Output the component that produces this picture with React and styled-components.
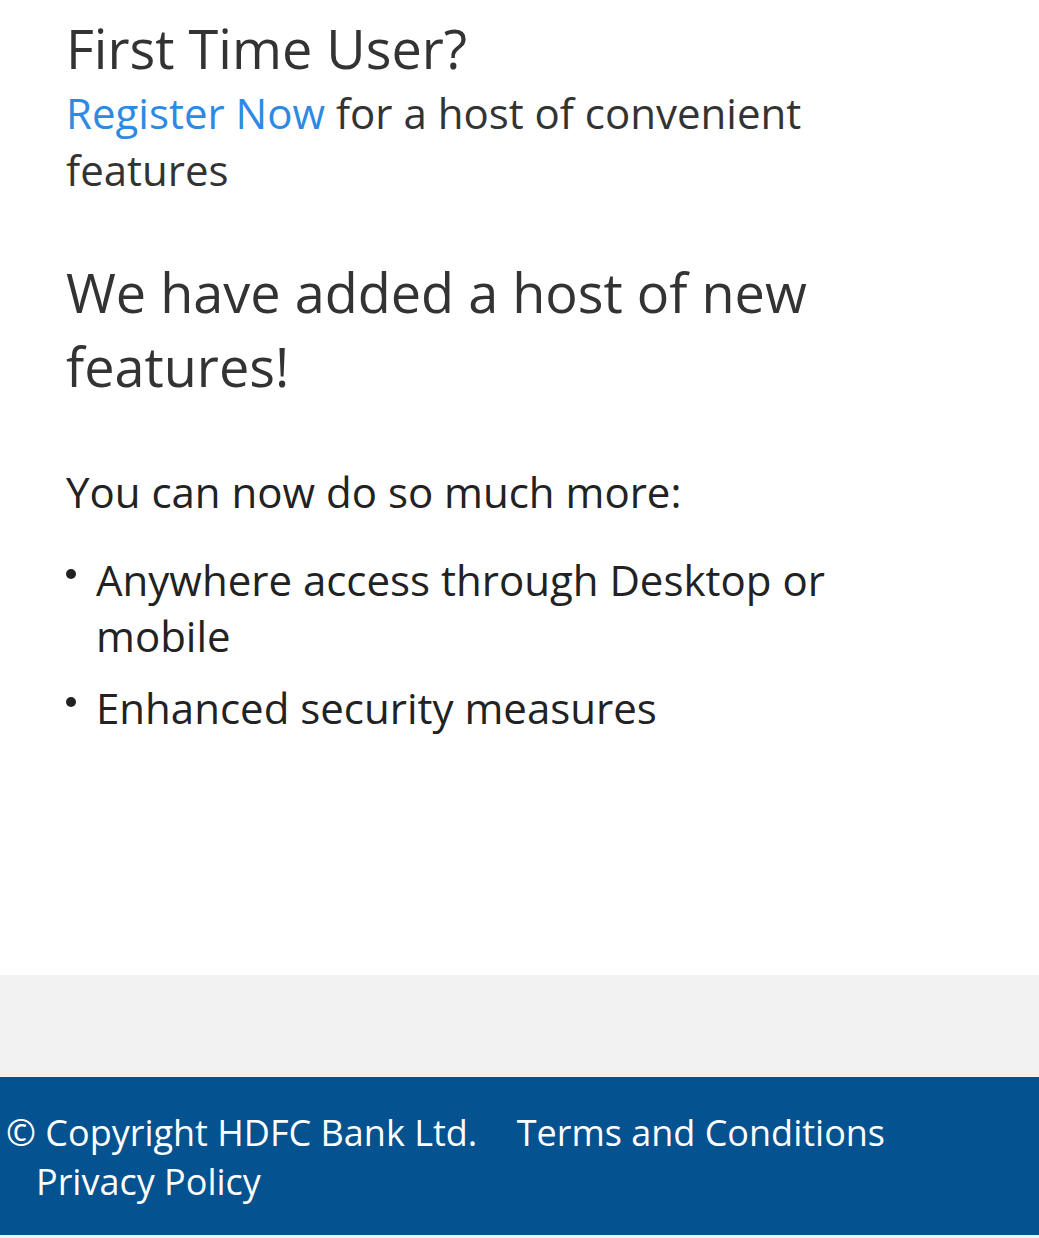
import React from 'react';
import styled, {createGlobalStyle} from 'styled-components';

const Global = createGlobalStyle`
    html, body {
        margin: 0;
        padding: 0;
        background: #fff;
    }
    body {
        font-family: 'Open Sans', 'Noto Sans', sans-serif;
        color: #333;
    }
`;

const Page = styled.div`
    width: 1039px;
    min-height: 1238px;
    display: flex;
    flex-direction: column;
    background: #eef5f8;
`;

const Main = styled.main`
    background: #fff;
    height: 975px;
    box-sizing: border-box;
    padding: 15px 66px 0 66px;
`;

const Title = styled.h2`
    margin: 0;
    font-size: 54px;
    line-height: 66px;
    font-weight: 400;
    color: #333;
`;

const Lead = styled.p`
    margin: 3px 0 0 0;
    font-size: 42px;
    line-height: 57px;
    color: #333;
    max-width: 760px;
`;

const Link = styled.a`
    color: #2d8ae2;
    text-decoration: none;
`;

const Heading = styled.h3`
    margin: 57px 0 0 0;
    font-size: 54px;
    line-height: 74px;
    font-weight: 400;
    color: #333;
    max-width: 800px;
`;

const Intro = styled.p`
    margin: 61px 0 0 0;
    font-size: 42px;
    line-height: 56px;
    color: #222;
`;

const List = styled.ul`
    list-style: none;
    margin: 32px 0 0 0;
    padding: 0;
    display: flex;
    flex-direction: column;
    gap: 16px;
`;

const Item = styled.li`
    display: flex;
    align-items: flex-start;
    font-size: 42px;
    line-height: 56px;
    color: #222;
`;

const Dot = styled.span`
    flex: 0 0 auto;
    width: 10px;
    height: 10px;
    border-radius: 50%;
    background: #222;
    margin: 17px 20px 0 0;
`;

const ItemText = styled.span`
    max-width: 760px;
`;

const Band = styled.div`
    height: 102px;
    background: #f2f2f2;
`;

const Footer = styled.footer`
    background: #04528f;
    height: 158px;
    box-sizing: border-box;
    padding: 31px 6px 0 6px;
    font-size: 36px;
    line-height: 49px;
    color: #fff;
`;

const FootLine = styled.p`
    margin: 0;
    max-width: 920px;
`;

const FootLink = styled.a`
    color: #fff;
    text-decoration: none;
    margin-left: ${p => p.$gap || 30}px;
`;

const Bottom = styled.div`
    height: 3px;
    background: #eef5f8;
`;

export default function App() {
    const features = [
        'Anywhere access through Desktop or mobile',
        'Enhanced security measures',
    ];

    return (
        <>
            <Global />
            <Page>
                <Main>
                    <Title>First Time User?</Title>
                    <Lead>
                        <Link href="#">Register Now</Link> for a host of convenient features
                    </Lead>

                    <Heading>We have added a host of new features!</Heading>

                    <Intro>You can now do so much more:</Intro>
                    <List>
                        {features.map((f) => (
                            <Item key={f}>
                                <Dot />
                                <ItemText>{f}</ItemText>
                            </Item>
                        ))}
                    </List>
                </Main>
                <Band />
                <Footer>
                    <FootLine>
                        © Copyright HDFC Bank Ltd. <FootLink href="#">Terms and Conditions</FootLink>{' '}
                        <FootLink href="#">Privacy Policy</FootLink>
                    </FootLine>
                </Footer>
                <Bottom />
            </Page>
        </>
    );
}
